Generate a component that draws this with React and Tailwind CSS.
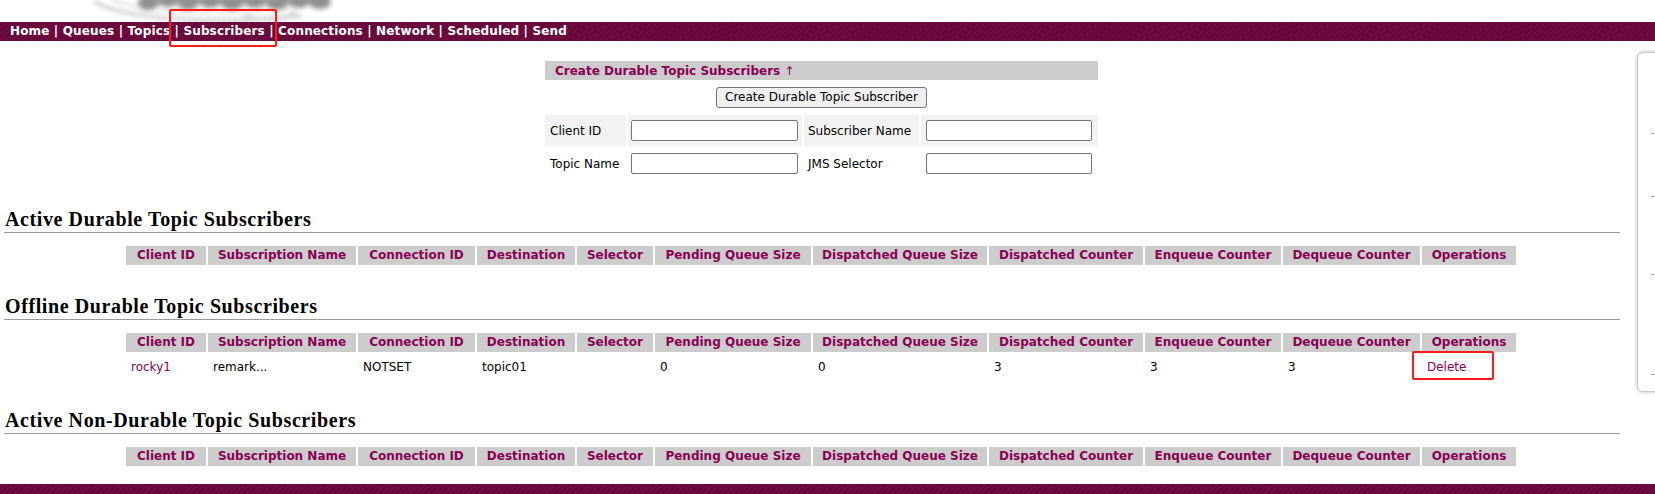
import React from "react";

const COLS = [
  "Client ID",
  "Subscription Name",
  "Connection ID",
  "Destination",
  "Selector",
  "Pending Queue Size",
  "Dispatched Queue Size",
  "Dispatched Counter",
  "Enqueue Counter",
  "Dequeue Counter",
  "Operations",
];

const GRID =
  "grid grid-cols-[80px_148px_117px_98px_76px_156px_174px_154px_136px_137px_94px] gap-[2px] ml-[126px] w-[1390px]";

function HeaderRow() {
  return COLS.map((c) => (
    <div
      key={c}
      className="h-[19px] bg-[#cccccc] flex items-center justify-center font-bold text-[12px] leading-[19px] text-[#880055] whitespace-nowrap"
    >
      {c}
    </div>
  ));
}

function Heading({ children }) {
  return (
    <div className="ml-[4px] w-[1616px] h-[27px] border-b border-[#999999] pl-[1px] font-['Liberation_Serif',serif] font-bold text-[20px] tracking-[0.6px] leading-[26px] text-black whitespace-nowrap">
      {children}
    </div>
  );
}

function Cell({ children, link }) {
  return (
    <div
      className={
        "h-[26px] flex items-center pl-[5px] text-[12px] whitespace-nowrap " +
        (link ? "text-[#880055]" : "text-black")
      }
    >
      {children}
    </div>
  );
}

function Logo() {
  const blobs = [
    [148, 3, 10, 7],
    [168, 1, 9, 6],
    [188, 3, 10, 7],
    [210, 2, 10, 6],
    [232, 3, 11, 7],
    [255, 2, 10, 6],
    [277, 3, 10, 7],
    [299, 2, 10, 6],
    [320, 2, 11, 7],
  ];
  return (
    <svg className="absolute left-0 top-0" width="380" height="22" viewBox="0 0 380 22">
      <defs>
        <filter id="bl" x="-20%" y="-100%" width="140%" height="300%">
          <feGaussianBlur stdDeviation="2" />
        </filter>
        <filter id="bl2" x="-20%" y="-100%" width="140%" height="300%">
          <feGaussianBlur stdDeviation="2.4" />
        </filter>
      </defs>
      <g filter="url(#bl)" fill="none" strokeLinecap="round">
        <path d="M95 2 C 125 20, 220 24, 300 16" stroke="#d6d6d6" strokeWidth="4" />
        <path d="M112 0 C 150 13, 220 15, 290 8" stroke="#e4e4e4" strokeWidth="3" />
        <path d="M245 15 C 262 22, 285 20, 295 12" stroke="#d2d2d2" strokeWidth="3" />
      </g>
      <g filter="url(#bl2)" fill="#8e8e8e">
        <rect x="140" y="-4" width="190" height="9" fill="#a0a0a0" />
        {blobs.map(([x, y, rx, ry]) => (
          <ellipse key={x} cx={x} cy={y} rx={rx} ry={ry} />
        ))}
      </g>
    </svg>
  );
}

export default function App() {
  return (
    <div className="relative w-[1655px] h-[494px] overflow-hidden bg-white font-['DejaVu_Sans',sans-serif]">
      {/* logo strip */}
      <div className="relative h-[22px] overflow-hidden">
        <Logo />
      </div>

      {/* nav bar */}
      <div className="h-[19px] bg-[#6b0b3e] bg-[repeating-linear-gradient(135deg,#6f0c41_0px,#6f0c41_2px,#640838_2px,#640838_4px)] flex items-center pl-[10px] text-white font-bold text-[12px] tracking-[0.15px] leading-[19px] whitespace-pre">
        Home | Queues | Topics | Subscribers | Connections | Network | Scheduled | Send
      </div>

      {/* create form */}
      <div className="mt-[20px] ml-[545px] w-[553px] grid grid-cols-[81px_174px_115px_177px] gap-[2px] text-[12px]">
        <div className="col-span-4 h-[19px] bg-[#cccccc] pl-[10px] flex items-center font-bold text-[#880055] whitespace-nowrap">
          Create Durable Topic Subscribers <span className="font-normal ml-[4px]">↑</span>
        </div>
        <div className="col-span-4 h-[31px] flex items-center justify-center">
          <button className="h-[21px] px-[8px] border border-[#767676] rounded-[3px] bg-[#efefef] text-[12px] text-black leading-[19px] whitespace-nowrap">
            Create Durable Topic Subscriber
          </button>
        </div>
        <div className="h-[31px] bg-[#f2f2f2] flex items-center pl-[5px] text-black">
          Client ID
        </div>
        <div className="h-[31px] bg-[#f2f2f2] flex items-center pl-[3px]">
          <input className="w-[167px] h-[21px] border border-[#767676] rounded-[2px] bg-white" />
        </div>
        <div className="h-[31px] bg-[#f2f2f2] flex items-center pl-[4px] text-black whitespace-nowrap">
          Subscriber Name
        </div>
        <div className="h-[31px] bg-[#f2f2f2] flex items-center pl-[5px]">
          <input className="w-[166px] h-[21px] border border-[#767676] rounded-[2px] bg-white" />
        </div>
        <div className="h-[31px] flex items-center pl-[5px] text-black whitespace-nowrap">
          Topic Name
        </div>
        <div className="h-[31px] flex items-center pl-[3px]">
          <input className="w-[167px] h-[21px] border border-[#767676] rounded-[2px] bg-white" />
        </div>
        <div className="h-[31px] flex items-center pl-[4px] text-black whitespace-nowrap">
          JMS Selector
        </div>
        <div className="h-[31px] flex items-center pl-[5px]">
          <input className="w-[166px] h-[21px] border border-[#767676] rounded-[2px] bg-white" />
        </div>
      </div>

      {/* Active durable */}
      <div className="mt-[27px]">
        <Heading>Active Durable Topic Subscribers</Heading>
      </div>
      <div className={"mt-[13px] " + GRID}>
        <HeaderRow />
      </div>

      {/* Offline durable */}
      <div className="mt-[28px]">
        <Heading>Offline Durable Topic Subscribers</Heading>
      </div>
      <div className={"mt-[13px] " + GRID}>
        <HeaderRow />
        <Cell link>rocky1</Cell>
        <Cell>remark...</Cell>
        <Cell>NOTSET</Cell>
        <Cell>topic01</Cell>
        <Cell></Cell>
        <Cell>0</Cell>
        <Cell>0</Cell>
        <Cell>3</Cell>
        <Cell>3</Cell>
        <Cell>3</Cell>
        <Cell link>Delete</Cell>
      </div>

      {/* Active non-durable */}
      <div className="mt-[27px]">
        <Heading>Active Non-Durable Topic Subscribers</Heading>
      </div>
      <div className={"mt-[13px] " + GRID}>
        <HeaderRow />
      </div>

      {/* bottom bar */}
      <div className="mt-[18px] h-[20px] bg-[#6b0b3e] bg-[repeating-linear-gradient(135deg,#6f0c41_0px,#6f0c41_2px,#640838_2px,#640838_4px)]" />

      {/* right side floating panel */}
      <div className="absolute left-[1637px] top-[52px] w-[30px] h-[340px] bg-white border border-[#c8c8c8] rounded-l-[6px] shadow-[0_0_4px_rgba(0,0,0,0.25)]">
        <div className="absolute right-[12px] top-[80px] w-[3px] h-px bg-[#999]" />
        <div className="absolute right-[12px] top-[143px] w-[3px] h-px bg-[#999]" />
        <div className="absolute right-[12px] top-[221px] w-[3px] h-px bg-[#999]" />
        <div className="absolute right-[12px] top-[321px] w-[3px] h-px bg-[#999]" />
      </div>

      {/* red annotation boxes */}
      <div className="absolute left-[169px] top-[9px] w-[108px] h-[38px] border-2 border-[#ff1a1a] rounded-[2px]" />
      <div className="absolute left-[1412px] top-[351px] w-[82px] h-[29px] border-2 border-[#ff1a1a] rounded-[2px]" />
    </div>
  );
}
